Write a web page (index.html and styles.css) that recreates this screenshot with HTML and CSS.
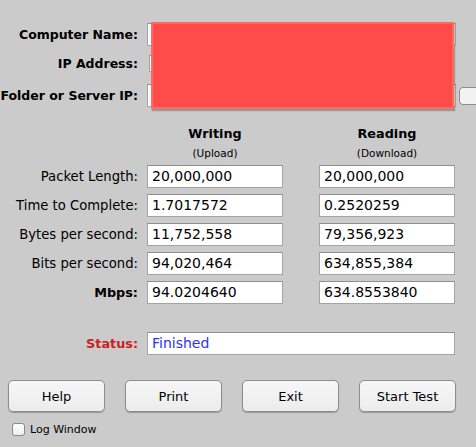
FILE: index.html
```html
<!DOCTYPE html>
<html>
<head>
<meta charset="utf-8">
<link rel="stylesheet" href="styles.css">
</head>
<body>
<div class="window">
  <div class="top">
    <div class="row row1">
      <div class="lbl bold">Computer Name:</div>
      <div class="field wide"></div>
    </div>
    <div class="row row2">
      <div class="lbl bold">IP Address:</div>
      <div class="field ip"></div>
    </div>
    <div class="row row3">
      <div class="lbl bold">Folder or Server IP:</div>
      <div class="field wide"></div>
      <div class="side-btn"></div>
    </div>
    <div class="redact"></div>
  </div>

  <div class="data">
    <div class="head-spacer"></div>
    <div class="head"><div class="h1">Writing</div><div class="h2">(Upload)</div></div>
    <div class="head"><div class="h1">Reading</div><div class="h2">(Download)</div></div>

    <div class="dlbl">Packet Length:</div>
    <div class="field val">20,000,000</div>
    <div class="field val">20,000,000</div>

    <div class="dlbl">Time to Complete:</div>
    <div class="field val">1.7017572</div>
    <div class="field val">0.2520259</div>

    <div class="dlbl">Bytes per second:</div>
    <div class="field val">11,752,558</div>
    <div class="field val">79,356,923</div>

    <div class="dlbl">Bits per second:</div>
    <div class="field val">94,020,464</div>
    <div class="field val">634,855,384</div>

    <div class="dlbl bold">Mbps:</div>
    <div class="field val">94.0204640</div>
    <div class="field val">634.8553840</div>
  </div>

  <div class="row status-row">
    <div class="lbl bold status-lbl">Status:</div>
    <div class="field val status">Finished</div>
  </div>

  <div class="buttons">
    <div class="btn">Help</div>
    <div class="btn">Print</div>
    <div class="btn">Exit</div>
    <div class="btn">Start Test</div>
  </div>

  <div class="log">
    <div class="check"></div>
    <span>Log Window</span>
  </div>
</div>
</body>
</html>
```

FILE: styles.css
```css
html, body {
  margin: 0;
  padding: 0;
  background: #cbcbcb;
}

.window {
  position: relative;
  width: 476px;
  height: 447px;
  overflow: hidden;
  background: #cbcbcb;
  font-family: "DejaVu Sans", "Liberation Sans", sans-serif;
  color: #000;
}

.top {
  padding-top: 23px;
}

.row {
  display: flex;
  align-items: center;
}

.lbl {
  width: 138px;
  margin-right: 9px;
  flex: none;
  display: flex;
  justify-content: flex-end;
  white-space: nowrap;
}

.bold {
  font-weight: bold;
  font-size: 12.8px;
}

.top .bold {
  font-size: 12.5px;
}

.row1 { height: 23px; }
.row2 { height: 17px; margin-top: 9px; }
.row3 { height: 23px; margin-top: 12px; }

.field {
  box-sizing: border-box;
  background: #fff;
  border: 1px solid #a4a4a4;
  border-top-color: #8f8f8f;
}

.wide {
  width: 309px;
  height: 23px;
  flex: none;
}

.ip {
  width: 200px;
  height: 17px;
  margin-left: 2px;
  flex: none;
}

.side-btn {
  flex: none;
  width: 30px;
  height: 18px;
  margin-left: 3px;
  box-sizing: border-box;
  border: 1px solid #8c8c8c;
  border-radius: 4px;
  background: #f2f2f2;
}

.redact {
  position: absolute;
  left: 151px;
  top: 22px;
  width: 303px;
  height: 87px;
  box-sizing: border-box;
  background: #ff4c4a;
  border: 2px solid #ff6a5f;
  box-shadow: 1px 2px 1px rgba(0, 0, 0, 0.25);
}

.data {
  display: grid;
  grid-template-columns: 147px 172px 136px;
  grid-template-rows: 33px;
  grid-auto-rows: 23px;
  row-gap: 6px;
  margin-top: 19px;
}

.data .head {
  width: 136px;
  display: flex;
  flex-direction: column;
  align-items: center;
}

.h1 {
  font-weight: bold;
  font-size: 12.8px;
  line-height: 15px;
}

.h2 {
  font-size: 10.5px;
  line-height: 12px;
  margin-top: 6px;
}

.dlbl {
  padding-right: 9px;
  display: flex;
  justify-content: flex-end;
  align-items: center;
  white-space: nowrap;
  font-size: 13.2px;
}

.dlbl.bold {
  font-size: 12.8px;
}

.val {
  width: 136px;
  height: 23px;
  padding-left: 4px;
  font-size: 14px;
  line-height: 21px;
  white-space: nowrap;
  overflow: hidden;
}

.status-row {
  margin-top: 28px;
  height: 23px;
}

.status-lbl {
  color: #cc1f1f;
}

.status {
  width: 308px;
  color: #2e2eff;
}

.buttons {
  display: flex;
  gap: 20px;
  margin-left: 8px;
  margin-top: 25px;
}

.btn {
  box-sizing: border-box;
  width: 97px;
  height: 32px;
  border: 1px solid #8d8d8d;
  border-radius: 5px;
  background: linear-gradient(#f7f7f7, #ececec);
  box-shadow: 0 1px 1px rgba(0, 0, 0, 0.25);
  display: flex;
  align-items: center;
  justify-content: center;
  font-size: 13px;
}

.log {
  display: flex;
  align-items: center;
  gap: 5px;
  margin-left: 12px;
  margin-top: 11px;
  font-size: 11px;
}

.check {
  box-sizing: border-box;
  width: 13px;
  height: 13px;
  border: 1px solid #8a8a8a;
  border-radius: 3px;
  background: linear-gradient(#fdfdfd, #efefef);
}
```
